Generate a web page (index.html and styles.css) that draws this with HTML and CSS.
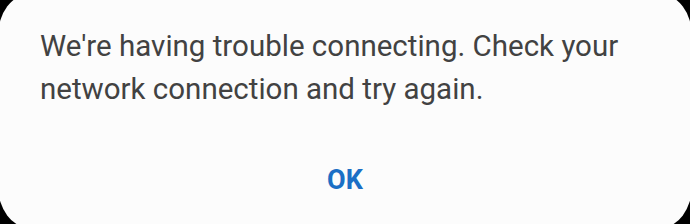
FILE: index.html
```html
<!DOCTYPE html>
<html>
<head>
<meta charset="utf-8">
<link rel="stylesheet" href="styles.css">
</head>
<body>
<div class="dialog">
  <p class="message">We're having trouble connecting. Check your network connection and try again.</p>
  <div class="actions">
    <button class="ok">OK</button>
  </div>
</div>
</body>
</html>
```
FILE: styles.css
```css
html, body {
  margin: 0;
  padding: 0;
  background: #000;
  overflow: hidden;
  width: 690px;
  height: 224px;
}
.dialog {
  box-sizing: border-box;
  margin: -6px 0 0 -2px;
  width: 694px;
  height: 234px;
  background: #fcfcfc;
  border-radius: 32px / 42px;
  padding: 31px 30px 0 42px;
  font-family: Roboto, "Noto Sans", sans-serif;
}
.message {
  margin: 0;
  font-size: 29.5px;
  line-height: 43px;
  color: #424242;
}
.actions {
  display: flex;
  justify-content: center;
  margin-top: 48px;
  margin-left: -42px;
  margin-right: -30px;
}
.ok {
  border: 0;
  background: none;
  padding: 0;
  font-family: Roboto, "Noto Sans", sans-serif;
  font-weight: 700;
  font-size: 27px;
  line-height: 43px;
  color: #1b6fc5;
}
```
